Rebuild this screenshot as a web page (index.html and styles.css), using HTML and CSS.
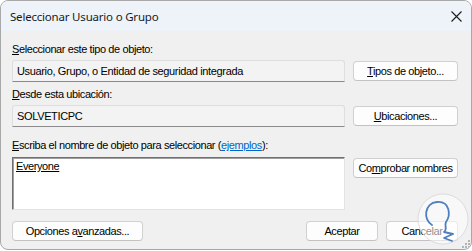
FILE: index.html
```html
<!DOCTYPE html>
<html lang="es">
<head>
    <meta charset="UTF-8">
    <meta name="viewport" content="width=device-width, initial-scale=1.0">
    <title>Seleccionar Usuario o Grupo</title>
    <link rel="stylesheet" href="styles.css">
</head>
<body>
    <div class="window">
        <!-- Title bar -->
        <div class="titlebar">
            <span class="title">Seleccionar Usuario o Grupo</span>
            <svg class="close" width="11" height="11" viewBox="0 0 11 11">
                <path d="M0.5 0.5 L10.5 10.5 M10.5 0.5 L0.5 10.5" stroke="#1a1a1a" stroke-width="1.1" fill="none"/>
            </svg>
        </div>

        <div class="content">
            <div class="group">
                <div class="label"><u>S</u>eleccionar este tipo de objeto:</div>
                <div class="row">
                    <div class="field">Usuario, Grupo, o Entidad de seguridad integrada</div>
                    <button class="btn side"><u>T</u>ipos de objeto...</button>
                </div>
            </div>

            <div class="group second">
                <div class="label"><u>D</u>esde esta ubicación:</div>
                <div class="row">
                    <div class="field">SOLVETICPC</div>
                    <button class="btn side"><u>U</u>bicaciones...</button>
                </div>
            </div>

            <div class="group third">
                <div class="label"><u>E</u>scriba el nombre de objeto para seleccionar (<a class="link" href="#">ejemplos</a>):</div>
                <div class="row">
                    <div class="names"><u>Everyone</u></div>
                    <button class="btn side">Co<u>m</u>probar nombres</button>
                </div>
            </div>

            <div class="footer">
                <button class="btn advanced">Opciones a<u>v</u>anzadas...</button>
                <div class="actions">
                    <button class="btn action">Aceptar</button>
                    <button class="btn action">Cancelar</button>
                </div>
            </div>
        </div>

        <!-- Watermark logo -->
        <svg class="watermark" width="52" height="52" viewBox="0 0 52 52">
            <circle cx="26" cy="26" r="25" fill="rgba(255,255,255,0.55)" stroke="rgba(210,210,215,0.7)" stroke-width="1"/>
            <path d="M15 32 C6 27 7 10 20 9 C33 8 34 22 29 29 C27 33 31 36 27 39 L36 41 L27 45 L35 48" stroke="#4f7fc0" stroke-width="1.8" fill="none" stroke-linecap="round" stroke-linejoin="round"/>
        </svg>

        <!-- Resize grip -->
        <svg class="grip" width="8" height="8" viewBox="0 0 8 8">
            <rect x="6" y="0" width="2" height="2" fill="#b4b4b4"/>
            <rect x="3" y="3" width="2" height="2" fill="#b4b4b4"/>
            <rect x="6" y="3" width="2" height="2" fill="#b4b4b4"/>
            <rect x="0" y="6" width="2" height="2" fill="#b4b4b4"/>
            <rect x="3" y="6" width="2" height="2" fill="#b4b4b4"/>
            <rect x="6" y="6" width="2" height="2" fill="#b4b4b4"/>
        </svg>
    </div>
</body>
</html>
```

FILE: styles.css
```css
* {
    box-sizing: border-box;
    margin: 0;
    padding: 0;
}
body {
    background-color: #ffffff;
    font-family: 'Liberation Sans', Arial, sans-serif;
    font-size: 11px;
    color: #000000;
}
.window {
    position: relative;
    width: 472px;
    height: 250px;
    border: 1px solid #a8a8a8;
    border-radius: 8px;
    background-color: #f0f0f0;
    overflow: hidden;
    display: flex;
    flex-direction: column;
}
.titlebar {
    height: 30px;
    background-color: #eef3fa;
    display: flex;
    align-items: center;
    justify-content: space-between;
    padding: 0 9px 0 9px;
}
.title {
    font-family: 'Noto Sans', sans-serif;
    font-size: 11.5px;
    letter-spacing: -0.2px;
    color: #1a1a1a;
}
.content {
    padding: 12px 13px 0 11px;
}
.label {
    height: 13px;
    line-height: 13px;
    letter-spacing: -0.4px;
    margin-bottom: 4px;
    white-space: nowrap;
}
.group.second {
    margin-top: 6px;
}
.group.third {
    margin-top: 12px;
}
.group.third .label {
    margin-bottom: 5px;
}
.row {
    display: flex;
    align-items: flex-start;
    gap: 8px;
}
.field {
    width: 333px;
    height: 22px;
    line-height: 20px;
    padding-left: 4px;
    background-color: #f3f3f3;
    border: 1px solid #dedede;
    border-bottom-color: #8a8a8a;
    border-radius: 3px 3px 0 0;
    letter-spacing: -0.35px;
    white-space: nowrap;
}
.names {
    width: 333px;
    height: 53px;
    padding: 2px 3px;
    line-height: 13px;
    background-color: #ffffff;
    border: 1px solid #e3e3e3;
    border-top-color: #6f6f6f;
    border-left-color: #6f6f6f;
    box-shadow: inset 1px 1px 0 #a0a0a0;
    letter-spacing: -0.4px;
}
.btn {
    font-family: inherit;
    font-size: 11px;
    letter-spacing: -0.4px;
    color: #000000;
    height: 20px;
    background-color: #fdfdfd;
    border: 1px solid #d0d0d0;
    border-bottom-color: #c2c2c2;
    border-radius: 4px;
    cursor: pointer;
    white-space: nowrap;
}
.btn.side {
    width: 105px;
    margin-top: 1px;
}
.link {
    color: #0066cc;
}
.footer {
    margin-top: 11px;
    display: flex;
    justify-content: space-between;
}
.btn.advanced {
    width: 131px;
}
.actions {
    display: flex;
    gap: 8px;
}
.btn.action {
    width: 72px;
}
.watermark {
    position: absolute;
    left: 416px;
    top: 192px;
}
.grip {
    position: absolute;
    right: 1px;
    bottom: 1px;
}
```
